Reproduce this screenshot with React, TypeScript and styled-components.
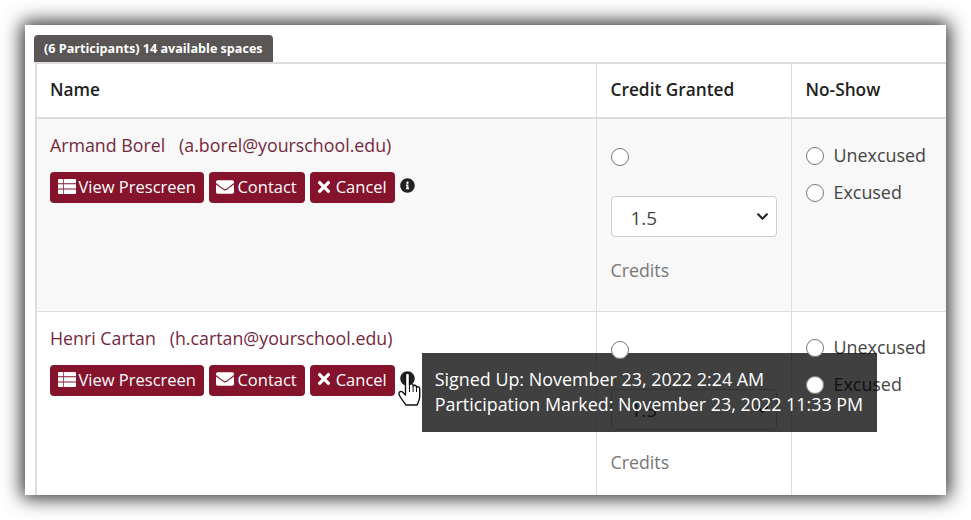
import React from 'react';
import styled, { createGlobalStyle } from 'styled-components';
import { FaEnvelope, FaTimes, FaInfoCircle, FaChevronDown } from 'react-icons/fa';

const GlobalStyle = createGlobalStyle`
    html, body {
        margin: 0;
        padding: 0;
        background: #fff;
        overflow: hidden;
    }
    body {
        font-family: "Open Sans", "Liberation Sans", sans-serif;
    }
`;

const Stage = styled.div`
    width: 971px;
    height: 520px;
    padding: 25px;
    box-sizing: border-box;
    overflow: hidden;
`;

const Panel = styled.div`
    width: 921px;
    height: 470px;
    box-sizing: border-box;
    padding: 10px 0 0 9px;
    background: #fff;
    overflow: hidden;
    box-shadow: 0 0 18px 3px rgba(0, 0, 0, 0.85);
`;

const Badge = styled.div`
    display: inline-block;
    height: 27px;
    padding: 0 10px;
    border-radius: 4px 4px 0 0;
    background: #5a5655;
    color: #fff;
    font-size: 12.6px;
    font-weight: 700;
    line-height: 27px;
    vertical-align: top;
`;

const Table = styled.table`
    display: block;
    margin-left: 1px;
    border-collapse: collapse;
    table-layout: fixed;
    width: 912px;
    border-left: 2px solid #ddd;
    border-top: 2px solid #ddd;
`;

const HeadCell = styled.th<{ $w: number }>`
    box-sizing: border-box;
    width: ${(p) => p.$w}px;
    height: 54px;
    padding: 0 14px 3px;
    border-right: 1px solid #ddd;
    border-bottom: 2px solid #ddd;
    color: #222;
    font-size: 17.3px;
    font-weight: 600;
    text-align: left;

    &:first-child {
        padding-left: 13px;
    }
`;

const Row = styled.tr<{ $shaded?: boolean }>`
    background: ${(p) => (p.$shaded ? '#f8f8f8' : '#fff')};
`;

const Cell = styled.td<{ $w: number }>`
    box-sizing: border-box;
    width: ${(p) => p.$w}px;
    min-width: ${(p) => p.$w}px;
    height: 193px;
    padding: 14px;
    border-right: 1px solid #ddd;
    border-bottom: 1px solid #ddd;
    vertical-align: top;
    color: #444;
    font-size: 17.8px;

    &:first-child {
        padding-left: 13px;
    }
`;

const NameLine = styled.a`
    display: block;
    color: #75283c;
    font-size: 17.8px;
    line-height: 25px;
    white-space: pre;
`;

const Actions = styled.div`
    display: flex;
    align-items: flex-start;
    gap: 5px;
    margin-top: 14px;
`;

const ActionButton = styled.button`
    display: inline-flex;
    align-items: center;
    gap: 3px;
    height: 31px;
    padding: 0 8px 2px 7.5px;
    border: 0;
    border-radius: 4px;
    background: #84132b;
    color: #fff;
    font-family: inherit;
    font-size: 16.5px;
    white-space: nowrap;

    svg {
        flex: none;
    }
`;

const CancelIcon = styled(FaTimes)`
    margin: 0 -0.5px 0 -2px;
`;

const InfoSpot = styled.span`
    position: relative;
    display: inline-block;
    color: #222;
    font-size: 15px;
    line-height: 1;
    padding-top: 6px;
`;

const Tooltip = styled.div`
    position: absolute;
    left: 22px;
    top: -12px;
    z-index: 1;
    width: 455px;
    height: 79px;
    box-sizing: border-box;
    padding: 14px 13px;
    background: rgba(0, 0, 0, 0.75);
    color: #fff;
    font-size: 17.9px;
    line-height: 25px;
    white-space: nowrap;
`;

const HandCursor = styled.svg`
    position: absolute;
    left: -2px;
    top: 7px;
    z-index: 2;
`;

const RadioInput = styled.input`
    position: relative;
    z-index: 2;
    width: 18px;
    height: 18px;
    margin: 0;
    flex: none;
`;

const CreditRadio = styled.div`
    display: flex;
    height: 18px;
    margin-top: 15px;
`;

const SelectWrap = styled.div`
    position: relative;
    width: 166px;
    margin-top: 30px;
    color: #222;
`;

const CreditSelect = styled.select`
    appearance: none;
    display: block;
    width: 100%;
    height: 41px;
    padding: 2px 19px 0;
    border: 1px solid #ccc;
    border-radius: 4px;
    background: #fff;
    color: #444;
    font-family: inherit;
    font-size: 19px;
`;

const Chevron = styled.span`
    position: absolute;
    right: 8px;
    top: 14px;
    font-size: 13px;
    line-height: 1;
    pointer-events: none;
`;

const CreditsNote = styled.div`
    margin-top: 20.5px;
    color: #777;
    font-size: 17.8px;
    line-height: 25px;
`;

const ChoiceList = styled.div`
    display: flex;
    flex-direction: column;
    gap: 12px;
    margin-top: 10px;
`;

const Choice = styled.label`
    display: flex;
    align-items: center;
    gap: 10px;
    height: 25px;
    line-height: 24px;
    font-size: 17.9px;
`;

const ChoiceText = styled.span`
    margin-top: -2px;
`;

const ListIcon = () => (
    <svg width="18" height="15" viewBox="0 0 18 15" fill="#fff">
        <path d="M0 1a1 1 0 0 1 1-1h4v4.3H0ZM5.7 0H17a1 1 0 0 1 1 1v3.3H5.7ZM0 5.2h5v4.4H0ZM5.7 5.2H18v4.4H5.7ZM0 10.5h5V15H1a1 1 0 0 1-1-1ZM5.7 10.5H18V14a1 1 0 0 1-1 1H5.7Z" />
    </svg>
);

const participants = [
    { name: 'Armand Borel', email: 'a.borel@yourschool.edu', shaded: true, tip: false },
    { name: 'Henri Cartan', email: 'h.cartan@yourschool.edu', shaded: false, tip: true },
];

const App = () => {
    return (
        <Stage>
            <GlobalStyle />
            <Panel>
                <Badge>(6 Participants) 14 available spaces</Badge>
                <Table>
                    <thead>
                        <tr>
                            <HeadCell $w={559}>Name</HeadCell>
                            <HeadCell $w={195}>Credit Granted</HeadCell>
                            <HeadCell $w={160}>No-Show</HeadCell>
                        </tr>
                    </thead>
                    <tbody>
                        {participants.map((p) => (
                            <Row key={p.email} $shaded={p.shaded}>
                                <Cell $w={559}>
                                    <NameLine>{`${p.name}   (${p.email})`}</NameLine>
                                    <Actions>
                                        <ActionButton><ListIcon />View Prescreen</ActionButton>
                                        <ActionButton><FaEnvelope size={18} />Contact</ActionButton>
                                        <ActionButton><CancelIcon size={18} />Cancel</ActionButton>
                                        <InfoSpot>
                                            <FaInfoCircle />
                                            {p.tip && (
                                                <>
                                                    <Tooltip>
                                                        Signed Up: November 23, 2022 2:24 AM
                                                        <br />
                                                        Participation Marked: November 23, 2022 11:33 PM
                                                    </Tooltip>
                                                    <HandCursor width="23" height="34" viewBox="0 0 23 34">
                                                        <path
                                                            d="M7.5 3a2 2 0 0 1 4 0v10a2 2 0 0 1 3.6 0v1a2 2 0 0 1 3.4.5v1a1.8 1.8 0 0 1 3.2 1V25c0 3-1.5 5-2.5 8H8C6 30 1.5 25 1 22c-.3-2 2-3.5 3.5-2l3 3Z"
                                                            fill="#fff"
                                                            stroke="#111"
                                                            strokeWidth="1.4"
                                                            strokeLinejoin="round"
                                                        />
                                                        <path d="M11.5 13v7M15.1 14v6M18.5 15.5V20" fill="none" stroke="#111" strokeWidth="1" />
                                                    </HandCursor>
                                                </>
                                            )}
                                        </InfoSpot>
                                    </Actions>
                                </Cell>
                                <Cell $w={195}>
                                    <CreditRadio><RadioInput type="radio" name={`credit-${p.email}`} /></CreditRadio>
                                    <SelectWrap>
                                        <CreditSelect defaultValue="1.5">
                                            <option>1.5</option>
                                        </CreditSelect>
                                        <Chevron><FaChevronDown /></Chevron>
                                    </SelectWrap>
                                    <CreditsNote>Credits</CreditsNote>
                                </Cell>
                                <Cell $w={160}>
                                    <ChoiceList>
                                        <Choice>
                                            <RadioInput type="radio" name={`show-${p.email}`} />
                                            <ChoiceText>Unexcused</ChoiceText>
                                        </Choice>
                                        <Choice>
                                            <RadioInput type="radio" name={`show-${p.email}`} />
                                            <ChoiceText>Excused</ChoiceText>
                                        </Choice>
                                    </ChoiceList>
                                </Cell>
                            </Row>
                        ))}
                    </tbody>
                </Table>
            </Panel>
        </Stage>
    );
};

export default App;
